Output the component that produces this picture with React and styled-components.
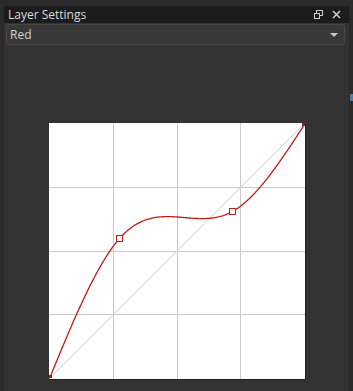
import React from 'react'
import styled, { createGlobalStyle } from 'styled-components'

const GlobalStyle = createGlobalStyle`
    html, body {
        margin: 0;
        padding: 0;
        background: #2b2b2b;
    }
    body {
        font-family: "Open Sans", "Noto Sans", "Liberation Sans", sans-serif;
    }
`

const Window = styled.div`
    width: 353px;
    height: 391px;
    display: flex;
    flex-direction: row;
    background: #2b2b2b;
    padding-top: 6px;
    padding-left: 4px;
    box-sizing: border-box;
    overflow: hidden;
`

const Panel = styled.div`
    width: 346px;
    display: flex;
    flex-direction: column;
    background: #333333;
    border-right: 1px solid #292929;
`

const TitleBar = styled.div`
    height: 17px;
    display: flex;
    align-items: center;
    justify-content: space-between;
    background: #1c1c1c;
    padding: 0 8px 0 4px;
`

const Title = styled.span`
    color: #d8d8d8;
    font-size: 12px;
    line-height: 17px;
`

const Tools = styled.div`
    display: flex;
    align-items: center;
    gap: 9px;
`

const Gutter = styled.div`
    flex: 1;
    display: flex;
    flex-direction: column;
    padding-top: 88px;
`

const BlueMark = styled.div`
    width: 3px;
    height: 7px;
    background: #4f7fa0;
`

const Select = styled.div`
    margin: 1px 4px 0 2px;
    height: 19px;
    display: flex;
    align-items: center;
    justify-content: space-between;
    border: 1px solid #474747;
    border-radius: 3px;
    background: #383838;
    padding: 0 6px 0 3px;
`

const SelectText = styled.span`
    color: #d4d4d4;
    font-size: 12px;
`

const Caret = styled.span`
    width: 0;
    height: 0;
    border-left: 4px solid transparent;
    border-right: 4px solid transparent;
    border-top: 4px solid #c8c8c8;
`

const ChartArea = styled.div`
    padding: 78px 0 0 45px;
`

const Chart = styled.svg`
    display: block;
    width: 256px;
    height: 256px;
    background: #ffffff;
    box-shadow: 1px 1px 0 #1f1f1f;
`

const SIZE = 255
const POINTS = [
    [0, 255],
    [70, 115],
    [183, 88],
    [255, 1],
]

// natural cubic spline through the control points
function splinePath(pts) {
    const n = pts.length - 1
    const xs = pts.map(p => p[0])
    const ys = pts.map(p => p[1])
    const h = []
    for (let i = 0; i < n; i++) h.push(xs[i + 1] - xs[i])
    const alpha = [0]
    for (let i = 1; i < n; i++) {
        alpha.push((3 / h[i]) * (ys[i + 1] - ys[i]) - (3 / h[i - 1]) * (ys[i] - ys[i - 1]))
    }
    const l = [1], mu = [0], z = [0]
    for (let i = 1; i < n; i++) {
        l.push(2 * (xs[i + 1] - xs[i - 1]) - h[i - 1] * mu[i - 1])
        mu.push(h[i] / l[i])
        z.push((alpha[i] - h[i - 1] * z[i - 1]) / l[i])
    }
    const c = new Array(n + 1).fill(0)
    const b = [], d = []
    for (let j = n - 1; j >= 0; j--) {
        c[j] = z[j] - mu[j] * c[j + 1]
        b[j] = (ys[j + 1] - ys[j]) / h[j] - (h[j] * (c[j + 1] + 2 * c[j])) / 3
        d[j] = (c[j + 1] - c[j]) / (3 * h[j])
    }
    const out = []
    for (let j = 0; j < n; j++) {
        for (let x = xs[j]; x <= xs[j + 1]; x += 1) {
            const t = x - xs[j]
            const y = ys[j] + b[j] * t + c[j] * t * t + d[j] * t * t * t
            out.push(`${x + 0.5},${Math.max(0.5, Math.min(255.5, y + 0.5)).toFixed(2)}`)
        }
    }
    return out.join(' ')
}

const Marker = ({ x, y }) => (
    <rect x={x - 2.5} y={y - 2.5} width="6" height="6" fill="#ffffff" stroke="#c41a1a" strokeWidth="1" />
)

export default function App() {
    const grid = [64, 128, 191]
    return (
        <>
            <GlobalStyle />
            <Window>
                <Panel>
                    <TitleBar>
                        <Title>Layer Settings</Title>
                        <Tools>
                            <svg width="9" height="9" viewBox="0 0 9 9">
                                <rect x="2.5" y="0.5" width="6" height="5" fill="none" stroke="#cfcfcf" />
                                <rect x="0.5" y="3.5" width="5" height="5" fill="#1c1c1c" stroke="#cfcfcf" />
                            </svg>
                            <svg width="9" height="9" viewBox="0 0 9 9">
                                <path d="M1 1 L8 8 M8 1 L1 8" stroke="#d8d8d8" strokeWidth="1.4" />
                            </svg>
                        </Tools>
                    </TitleBar>
                    <Select>
                        <SelectText>Red</SelectText>
                        <Caret />
                    </Select>
                    <ChartArea>
                        <Chart viewBox="0 0 256 256">
                            {grid.map(g => (
                                <g key={g}>
                                    <line x1={g + 0.5} y1="0" x2={g + 0.5} y2="256" stroke="#c9c9c9" />
                                    <line x1="0" y1={g + 0.5} x2="256" y2={g + 0.5} stroke="#c9c9c9" />
                                </g>
                            ))}
                            <line x1="0.5" y1="255.5" x2="255.5" y2="0.5" stroke="#d6d6d6" />
                            <polyline points={splinePath(POINTS)} fill="none" stroke="#c41a1a" strokeWidth="1.3" />
                            <Marker x={POINTS[1][0]} y={POINTS[1][1]} />
                            <Marker x={POINTS[2][0]} y={POINTS[2][1]} />
                            <rect x="0" y={SIZE - 3} width="3" height="3" fill="#7a3030" />
                            <rect x={SIZE - 2} y="0" width="3" height="3" fill="#7a3030" />
                        </Chart>
                    </ChartArea>
                </Panel>
                <Gutter>
                    <BlueMark />
                </Gutter>
            </Window>
        </>
    )
}
